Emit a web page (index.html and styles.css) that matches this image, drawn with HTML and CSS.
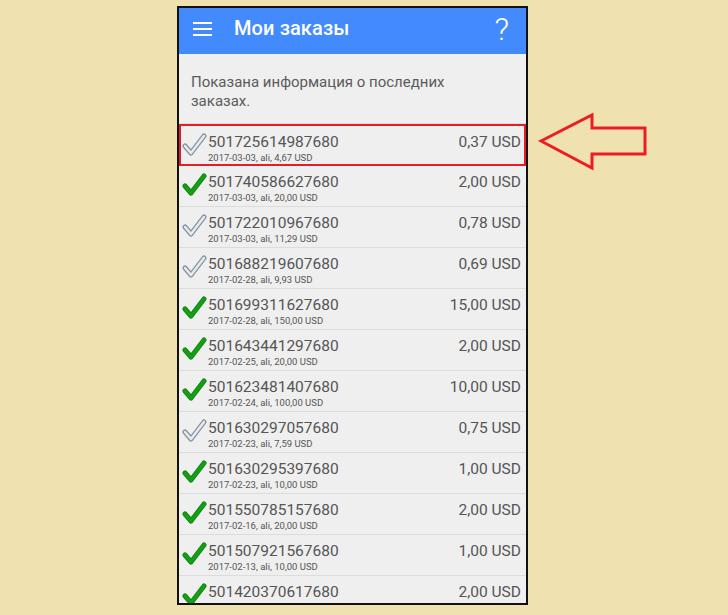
FILE: index.html
```html
<!DOCTYPE html>
<html lang="ru">
<head>
  <meta charset="UTF-8">
  <title>Мои заказы</title>
  <link rel="stylesheet" href="styles.css">
</head>
<body>
  <div class="stage">
    <div class="phone">
      <header class="appbar">
        <svg class="menu" width="20" height="14" viewBox="0 0 20 14">
          <rect x="0" y="0" width="19" height="2" fill="#fff"/>
          <rect x="0" y="6" width="19" height="2" fill="#fff"/>
          <rect x="0" y="12" width="19" height="2" fill="#fff"/>
        </svg>
        <span class="title">Мои заказы</span>
        <span class="help">?</span>
      </header>

      <p class="intro">Показана информация о последних заказах.</p>

      <ul class="orders">
        <li class="order selected">
          <svg class="check grey"><use href="#tick"/></svg>
          <div class="info"><div class="num">501725614987680</div><div class="meta">2017-03-03, ali, 4,67 USD</div></div>
          <div class="sum">0,37 USD</div>
        </li>
        <li class="order">
          <svg class="check green"><use href="#tick"/></svg>
          <div class="info"><div class="num">501740586627680</div><div class="meta">2017-03-03, ali, 20,00 USD</div></div>
          <div class="sum">2,00 USD</div>
        </li>
        <li class="order">
          <svg class="check grey"><use href="#tick"/></svg>
          <div class="info"><div class="num">501722010967680</div><div class="meta">2017-03-03, ali, 11,29 USD</div></div>
          <div class="sum">0,78 USD</div>
        </li>
        <li class="order">
          <svg class="check grey"><use href="#tick"/></svg>
          <div class="info"><div class="num">501688219607680</div><div class="meta">2017-02-28, ali, 9,93 USD</div></div>
          <div class="sum">0,69 USD</div>
        </li>
        <li class="order">
          <svg class="check green"><use href="#tick"/></svg>
          <div class="info"><div class="num">501699311627680</div><div class="meta">2017-02-28, ali, 150,00 USD</div></div>
          <div class="sum">15,00 USD</div>
        </li>
        <li class="order">
          <svg class="check green"><use href="#tick"/></svg>
          <div class="info"><div class="num">501643441297680</div><div class="meta">2017-02-25, ali, 20,00 USD</div></div>
          <div class="sum">2,00 USD</div>
        </li>
        <li class="order">
          <svg class="check green"><use href="#tick"/></svg>
          <div class="info"><div class="num">501623481407680</div><div class="meta">2017-02-24, ali, 100,00 USD</div></div>
          <div class="sum">10,00 USD</div>
        </li>
        <li class="order">
          <svg class="check grey"><use href="#tick"/></svg>
          <div class="info"><div class="num">501630297057680</div><div class="meta">2017-02-23, ali, 7,59 USD</div></div>
          <div class="sum">0,75 USD</div>
        </li>
        <li class="order">
          <svg class="check green"><use href="#tick"/></svg>
          <div class="info"><div class="num">501630295397680</div><div class="meta">2017-02-23, ali, 10,00 USD</div></div>
          <div class="sum">1,00 USD</div>
        </li>
        <li class="order">
          <svg class="check green"><use href="#tick"/></svg>
          <div class="info"><div class="num">501550785157680</div><div class="meta">2017-02-16, ali, 20,00 USD</div></div>
          <div class="sum">2,00 USD</div>
        </li>
        <li class="order">
          <svg class="check green"><use href="#tick"/></svg>
          <div class="info"><div class="num">501507921567680</div><div class="meta">2017-02-13, ali, 10,00 USD</div></div>
          <div class="sum">1,00 USD</div>
        </li>
        <li class="order">
          <svg class="check green"><use href="#tick"/></svg>
          <div class="info"><div class="num">501420370617680</div></div>
          <div class="sum">2,00 USD</div>
        </li>
      </ul>
    </div>

    <!-- pointer to the highlighted order -->
    <svg class="pointer" width="110" height="60" viewBox="0 0 110 60">
      <polygon points="3,29 54,3 54,16 107,16 107,42 54,42 54,56" fill="none" stroke="#ed1c24" stroke-width="3"/>
    </svg>
  </div>

  <svg width="0" height="0" class="sprites">
    <defs>
      <g id="tick" fill="none" stroke-linecap="round" stroke-linejoin="round">
        <path d="M4 13 L10 20 L23 3" style="stroke: var(--edge); stroke-width: var(--edge-w)"/>
        <path d="M4 13 L10 20 L23 3" style="stroke: var(--body); stroke-width: var(--body-w)"/>
      </g>
    </defs>
  </svg>
</body>
</html>
```

FILE: styles.css
```css
body { margin: 0; background: #f0e2b0; font-family: Roboto, "Noto Sans", sans-serif; }
.stage { position: relative; height: 615px; padding: 6px 0 0 177px; box-sizing: border-box; }
.sprites { position: absolute; }

.phone { width: 347px; height: 595px; border: 2px solid #111; background: #efefef; overflow: hidden; display: flex; flex-direction: column; }

.appbar { height: 46px; flex-shrink: 0; box-sizing: border-box; padding-bottom: 6px; background: #448aff; display: flex; align-items: center; color: #fff; }
.menu { margin-left: 14px; margin-top: 1px; }
.title { margin-left: 21px; font-size: 20px; font-weight: 500; letter-spacing: 0.1px; }
.help { margin-left: auto; margin-right: 17px; font-size: 32px; font-weight: 300; line-height: 1; margin-top: 2px; }

.intro { margin: 0; padding: 19px 60px 12px 12px; font-size: 15px; line-height: 19px; color: #5b5b5b; border-bottom: 1px solid #dcdcdc; }

.orders { list-style: none; margin: 0; padding: 0; }
.order { height: 40px; border-bottom: 1px solid #dcdcdc; display: flex; align-items: flex-start; padding: 0 5px 0 2px; }
.order.selected { height: 38px; border: 2px solid #e41e26; padding-left: 0; padding-right: 3px; }

.check { width: 26px; height: 24px; margin-top: 7px; flex-shrink: 0; }
.check.green { --edge: #0f8a0f; --edge-w: 5px; --body: #169e16; --body-w: 3px; }
.check.grey { --edge: #8593a0; --edge-w: 5px; --body: #e8ebee; --body-w: 2.5px; }

.info { margin-left: 1px; flex: 1; }
.num { font-size: 15.5px; line-height: 18px; margin-top: 7px; color: #555; }
.meta { font-size: 9.5px; line-height: 12px; margin-top: 1px; color: #555; }
.sum { font-size: 15.5px; line-height: 18px; margin-top: 7px; color: #555; }

.pointer { position: absolute; left: 538px; top: 112px; }
```
